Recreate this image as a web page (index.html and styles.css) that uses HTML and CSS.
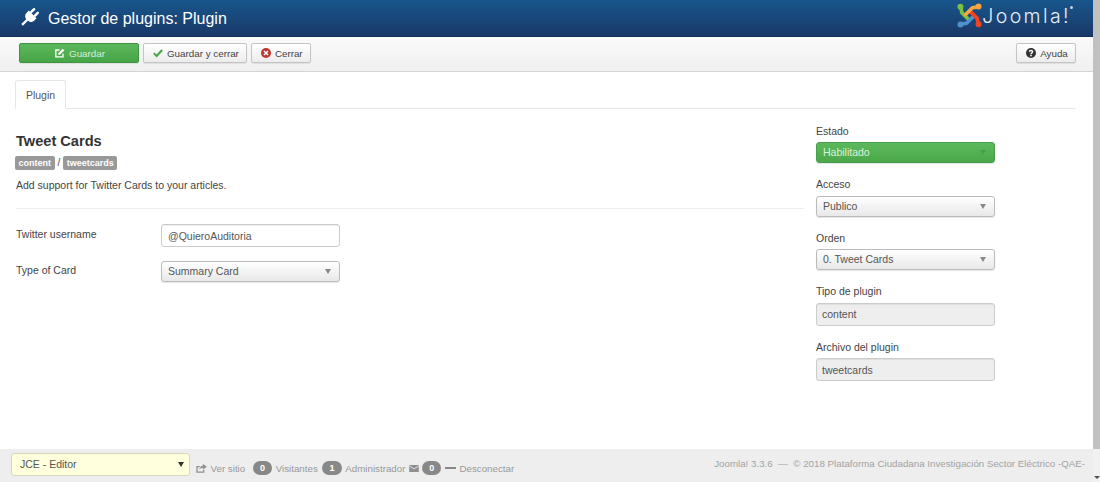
FILE: index.html
```html
<!DOCTYPE html>
<html lang="en">
<head>
    <meta charset="UTF-8">
    <title>Gestor de plugins: Plugin</title>
    <link rel="stylesheet" href="styles.css">
</head>
<body>
<div class="window">
    <div class="page">
        <header class="header">
            <svg class="plug" viewBox="0 0 19 19" width="17" height="17">
                <g fill="#fff" transform="rotate(45 9.5 9.5) translate(0 -2)">
                    <rect x="5.2" y="-1.6" width="2.8" height="7" rx="1.3"/>
                    <rect x="11" y="-1.6" width="2.8" height="7" rx="1.3"/>
                    <path d="M3.4 5 H15.6 V8.4 C15.6 11.8 13 14 9.5 14 C6 14 3.4 11.8 3.4 8.4 Z"/>
                    <rect x="8.2" y="13" width="2.6" height="8.6"/>
                </g>
            </svg>
            <h1 class="page-title">Gestor de plugins: Plugin</h1>
            <div class="logo">
                <svg class="logo-mark" viewBox="0 0 26 26" width="25" height="25">
                    <g fill="none" stroke-width="3.8" stroke-linecap="round" stroke-linejoin="round">
                        <path stroke="#7ac143" d="M4 4 L5 10 L12 17"/>
                        <path stroke="#5091cd" d="M4 22 L10 21 L17 14"/>
                        <path stroke="#f44321" d="M22 22 L21 16 L14 9"/>
                        <path stroke="#f9a541" d="M22 4 L16 5 L9 12"/>
                    </g>
                    <circle cx="3.6" cy="3.8" r="3.1" fill="#7ac143"/>
                    <circle cx="22.4" cy="3.6" r="3.1" fill="#f9a541"/>
                    <circle cx="22.4" cy="22.2" r="3.1" fill="#f44321"/>
                    <circle cx="3.6" cy="22.4" r="3.1" fill="#5091cd"/>
                </svg>
                <span class="logo-text">Joomla!</span>
                <span class="logo-reg"></span>
            </div>
        </header>

        <div class="toolbar">
            <button class="btn btn-save">
                <svg class="icon" viewBox="0 0 12 12" width="10" height="10"><path fill="none" stroke="#fff" stroke-width="1.6" d="M9.6 7 V10.6 H1 V2.4 H5.4"/><path fill="#fff" d="M4 6.4 L9.2 1 L11.2 3 L5.8 8.2 H4 Z"/></svg>
                Guardar
            </button>
            <button class="btn">
                <svg class="icon" viewBox="0 0 12 12" width="10" height="10"><path fill="none" stroke="#46a546" stroke-width="2.4" d="M1 6.2 L4.4 9.6 L11 2.4"/></svg>
                Guardar y cerrar
            </button>
            <button class="btn">
                <svg class="icon" viewBox="0 0 12 12" width="10" height="10"><circle cx="6" cy="6" r="6" fill="#bd362f"/><path stroke="#fff" stroke-width="1.9" d="M3.6 3.6 L8.4 8.4 M8.4 3.6 L3.6 8.4"/></svg>
                Cerrar
            </button>
            <button class="btn btn-help">
                <svg class="icon" viewBox="0 0 12 12" width="10" height="10"><circle cx="6" cy="6" r="6" fill="#333"/><path fill="none" stroke="#fff" stroke-width="1.6" d="M4 4.6 C4 2.4 8 2.4 8 4.6 C8 6 6 5.8 6 7.4"/><rect x="5.1" y="8.2" width="1.8" height="1.7" fill="#fff"/></svg>
                Ayuda
            </button>
        </div>

        <main class="content">
            <div class="tabs"><a class="tab">Plugin</a></div>
            <div class="columns">
                <section class="details">
                    <h2 class="plugin-name">Tweet Cards</h2>
                    <div class="tags"><span class="tag">content</span> / <span class="tag">tweetcards</span></div>
                    <p class="description">Add support for Twitter Cards to your articles.</p>
                    <hr class="divider">
                    <div class="form-row">
                        <label class="row-label">Twitter username</label>
                        <input class="input" type="text" value="@QuieroAuditoria">
                    </div>
                    <div class="form-row">
                        <label class="row-label">Type of Card</label>
                        <div class="select">Summary Card<span class="caret"></span></div>
                    </div>
                </section>
                <aside class="sidebar">
                    <div class="field">
                        <label>Estado</label>
                        <div class="select select-green">Habilitado<span class="caret"></span></div>
                    </div>
                    <div class="field">
                        <label>Acceso</label>
                        <div class="select">Publico<span class="caret"></span></div>
                    </div>
                    <div class="field">
                        <label>Orden</label>
                        <div class="select">0. Tweet Cards<span class="caret"></span></div>
                    </div>
                    <div class="field">
                        <label>Tipo de plugin</label>
                        <input class="input input-readonly" type="text" value="content" readonly>
                    </div>
                    <div class="field">
                        <label>Archivo del plugin</label>
                        <input class="input input-readonly" type="text" value="tweetcards" readonly>
                    </div>
                </aside>
            </div>
        </main>

        <footer class="status">
            <div class="editor-select">JCE - Editor<span class="caret caret-dark"></span></div>
            <div class="status-links">
                <svg class="status-icon" viewBox="0 0 12 10" width="11" height="9"><path fill="none" stroke="#8f8f8f" stroke-width="1.4" d="M8.5 6.5 V9 H1 V3 H4"/><path fill="#8f8f8f" d="M7.5 0 L12 3 L7.5 6 V4.2 C5.5 4.2 4.4 5 3.6 6.4 C3.8 3.8 5.4 2.2 7.5 2 Z"/></svg>
                <span class="site-link">Ver sitio</span>
                <span class="count">0</span><span>Visitantes</span>
                <span class="count">1</span><span>Administrador</span>
                <svg class="mail-icon" viewBox="0 0 11 8" width="10" height="7"><rect width="11" height="8" fill="#8f8f8f"/><path fill="none" stroke="#ececec" d="M0 1 L5.5 4.5 L11 1"/></svg>
                <span class="count">0</span>
                <span class="dash"></span>
                <span>Desconectar</span>
            </div>
            <div class="copyright">Joomla! 3.3.6 &nbsp;—&nbsp; © 2018 Plataforma Ciudadana Investigación Sector Eléctrico -QAE-</div>
        </footer>
    </div>
    <div class="scrollbar">
        <div class="scroll-thumb"></div>
        <div class="scroll-arrow"></div>
    </div>
</div>
</body>
</html>
```

FILE: styles.css
```css
* {
    box-sizing: border-box;
}

html, body {
    margin: 0;
    height: 100%;
    overflow: hidden;
}

body {
    font-family: "Liberation Sans", Arial, sans-serif;
    font-size: 10.5px;
    color: #444;
    background: #fff;
}

.window {
    display: flex;
    height: 482px;
}

.page {
    flex: 1;
    min-width: 0;
    display: flex;
    flex-direction: column;
}

/* header */
.header {
    height: 37px;
    display: flex;
    align-items: center;
    padding: 1px 20px 0;
    background: linear-gradient(to bottom, #17568c, #1a3867);
    border-bottom: 1px solid #12305a;
}

.plug {
    margin-right: 11px;
    overflow: visible;
}

.page-title {
    margin: 0;
    font-size: 16px;
    font-weight: normal;
    color: #fff;
}

.logo {
    margin-left: auto;
    display: flex;
    align-items: center;
    position: relative;
    top: -3px;
}

.logo-text {
    font-family: Inter, sans-serif;
    font-weight: 300;
    font-size: 19.5px;
    color: #e8eef4;
    letter-spacing: 2.4px;
}

.logo-reg {
    width: 3px;
    height: 3px;
    border-radius: 50%;
    background: #c8d4e0;
    margin: -16px 0 0 -1px;
}

/* toolbar */
.toolbar {
    height: 35px;
    display: flex;
    align-items: center;
    gap: 4px;
    padding: 0 17px 2px 19px;
    background: linear-gradient(to bottom, #fafafa, #f0f0f0);
    border-bottom: 1px solid #d4d4d4;
}

.btn {
    height: 20px;
    padding: 0 7px 0 9px;
    display: flex;
    align-items: center;
    justify-content: center;
    gap: 4px;
    font-family: inherit;
    font-size: 9.8px;
    color: #444;
    background: linear-gradient(to bottom, #fff, #ececec);
    border: 1px solid #c4c4c4;
    border-radius: 2px;
    box-shadow: 0 1px 1px rgba(0, 0, 0, 0.08);
}

.btn-save {
    width: 120px;
    color: #d8eed8;
    background: linear-gradient(to bottom, #5cb85c, #46a546);
    border-color: #3f943f;
}

.btn-help {
    margin-left: auto;
    width: 60px;
}

/* content */
.content {
    flex: 1;
    padding: 8px 17px 0 16px;
}

.tabs {
    height: 29px;
    border-bottom: 1px solid #e6e6e6;
}

.tab {
    display: block;
    width: 51px;
    height: 29px;
    margin-left: -1px;
    line-height: 28px;
    text-align: center;
    color: #555;
    background: #fff;
    border: 1px solid #e6e6e6;
    border-bottom-color: #fff;
    border-radius: 3px 3px 0 0;
}

.columns {
    display: flex;
    gap: 12px;
}

.details {
    width: 788px;
    padding-top: 24px;
}

.plugin-name {
    margin: 0;
    font-size: 14.6px;
    line-height: 17px;
    color: #333;
}

.tags {
    margin-top: 5px;
    height: 15px;
    display: flex;
    align-items: center;
    gap: 3px;
    font-size: 10px;
}

.tag {
    padding: 0 3.5px;
    height: 14px;
    line-height: 14px;
    font-size: 9px;
    font-weight: bold;
    color: #fff;
    background: #999;
    border-radius: 2px;
}

.tag:first-child {
    margin-left: -1px;
}

.description {
    margin: 8px 0 0;
    line-height: 14px;
}

.divider {
    margin: 16px 0 15px;
    border: 0;
    border-top: 1px solid #eee;
}

.form-row {
    display: flex;
    align-items: center;
    margin-bottom: 14px;
}

.row-label {
    width: 145px;
    padding-bottom: 4px;
}

.input {
    width: 179px;
    height: 23px;
    padding: 0 6px;
    font-family: inherit;
    font-size: 10.5px;
    color: #555;
    background: #fff;
    border: 1px solid #ccc;
    border-radius: 3px;
    box-shadow: inset 0 1px 1px rgba(0, 0, 0, 0.07);
}

.input-readonly {
    padding: 0 5px;
    background: #eee;
}

.select {
    position: relative;
    width: 179px;
    height: 21px;
    line-height: 19px;
    padding: 0 6px;
    font-size: 10.5px;
    color: #555;
    background: linear-gradient(to bottom, #fff, #e8e8e8);
    border: 1px solid #bbb;
    border-radius: 3px;
    box-shadow: 0 1px 1px rgba(0, 0, 0, 0.1);
}

.select-green {
    color: #dff0d8;
    background: linear-gradient(to bottom, #5cb85c, #4aa84a);
    border-color: #4a9d4a;
}

.caret {
    position: absolute;
    right: 8px;
    top: 7px;
    border-left: 3px solid transparent;
    border-right: 3px solid transparent;
    border-top: 5px solid #888;
}

.select-green .caret {
    border-top-color: #4a9d4a;
}

/* sidebar */
.sidebar {
    width: 180px;
    padding-top: 15.6px;
}

.field {
    margin-bottom: 15px;
}

.field label {
    display: block;
    line-height: 12px;
    margin-bottom: 5.5px;
}

/* status bar */
.status {
    height: 33px;
    display: flex;
    align-items: center;
    padding: 0 8px 3px 11px;
    font-size: 9.75px;
    color: #999;
    background: #eee;
}

.editor-select {
    position: relative;
    width: 179px;
    height: 23px;
    line-height: 21px;
    padding: 0 8px;
    font-size: 10.5px;
    color: #555;
    background: #ffffdd;
    border: 1px solid #d8d8c0;
    border-radius: 3px;
}

.caret-dark {
    border-top-color: #333;
    top: 8px;
    right: 5px;
}

.status-links {
    display: flex;
    align-items: center;
    gap: 3.5px;
    margin: 8px 0 0 6px;
}

.site-link {
    margin-right: 3px;
}

.count {
    width: 19.5px;
    height: 14px;
    margin-left: 1px;
    line-height: 14px;
    text-align: center;
    font-weight: bold;
    font-size: 9px;
    color: #fff;
    background: #888;
    border-radius: 7px;
}

.mail-icon {
    margin-right: -1.5px;
}

.dash {
    width: 11px;
    height: 2px;
    background: #888;
}

.copyright {
    margin-left: auto;
    color: #a3a3a3;
    margin-top: -2px;
}

/* scrollbar */
.scrollbar {
    width: 7px;
    display: flex;
    flex-direction: column;
    align-items: center;
    background: #f1f1f1;
}

.scroll-thumb {
    width: 100%;
    height: 449px;
    background: #c1c1c1;
}

.scroll-arrow {
    margin-top: 27px;
    border-left: 3px solid transparent;
    border-right: 3px solid transparent;
    border-top: 3px solid #505050;
}
```
